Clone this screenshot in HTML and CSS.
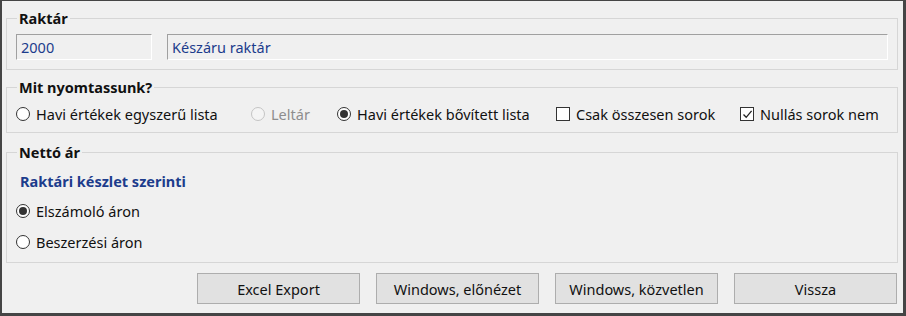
FILE: index.html
```html
<!DOCTYPE html>
<html>
<head>
    <meta charset="UTF-8">
    <meta name="viewport" content="width=device-width, initial-scale=1.0">
    <title>Raktár nyomtatás</title>
    <link rel="stylesheet" href="styles.css">
</head>
<body>
    <div id="window">
        <fieldset class="group group-store">
            <legend>Raktár</legend>
            <div class="fields">
                <div class="field field-code">2000</div>
                <div class="field field-name">Készáru raktár</div>
            </div>
        </fieldset>

        <fieldset class="group group-print">
            <legend>Mit nyomtassunk?</legend>
            <div class="options">
                <label class="option"><span class="radio"></span>Havi értékek egyszerű lista</label>
                <label class="option disabled"><span class="radio"></span>Leltár</label>
                <label class="option"><span class="radio checked"></span>Havi értékek bővített lista</label>
                <label class="option"><span class="check"></span>Csak összesen sorok</label>
                <label class="option">
                    <span class="check checked">
                        <svg width="11" height="11" viewBox="0 0 11 11"><path d="M1.5 5.5 L4.2 8.3 L9.6 1.8" fill="none" stroke="#222" stroke-width="1.3"/></svg>
                    </span>Nullás sorok nem
                </label>
            </div>
        </fieldset>

        <fieldset class="group group-price">
            <legend>Nettó ár</legend>
            <div class="subhead">Raktári készlet szerinti</div>
            <label class="option row"><span class="radio checked"></span>Elszámoló áron</label>
            <label class="option row second"><span class="radio"></span>Beszerzési áron</label>
        </fieldset>

        <div class="buttons">
            <button>Excel Export</button>
            <button>Windows, előnézet</button>
            <button>Windows, közvetlen</button>
            <button>Vissza</button>
        </div>
    </div>
</body>
</html>
```

FILE: styles.css
```css
body {
    margin: 0;
    font-family: "Noto Sans", "Open Sans", sans-serif;
    font-size: 14.5px;
    color: #111;
    background-color: #f0f0f0;
}

#window {
    width: 906px;
    height: 316px;
    box-sizing: border-box;
    border-style: solid;
    border-color: #454545;
    border-width: 1px 3px 3px 2px;
    background-color: #f0f0f0;
    padding: 9px 5px 0 4px;
}

.group {
    margin: 0;
    border: 1px solid #d6d6d6;
    padding: 0 9px 8px 9px;
    min-width: 0;
}

.group legend {
    font-weight: bold;
    font-size: 14.5px;
    line-height: 16px;
    padding: 0 2px;
    margin-left: 1px;
}

.group-store {
    padding-bottom: 9px;
}

.fields {
    display: flex;
    gap: 15px;
    padding-top: 8px;
}

.field {
    height: 26px;
    box-sizing: border-box;
    border: 1px solid;
    border-color: #a0a0a0 #fff #fff #a0a0a0;
    color: #1c3c8c;
    padding: 0 4px;
    line-height: 24px;
}

.field-code {
    width: 136px;
}

.field-name {
    flex: 1;
}

.group-print {
    margin-top: 9px;
}

.options {
    display: grid;
    grid-template-columns: 235px 86px 219px 184px 1fr;
    padding-top: 9px;
    height: 20px;
}

.option {
    display: flex;
    align-items: center;
    gap: 6px;
    white-space: nowrap;
    line-height: 20px;
}

.option.disabled {
    color: #8d8d8d;
}

.radio {
    width: 14px;
    height: 14px;
    box-sizing: border-box;
    border: 1px solid #333;
    border-radius: 50%;
    background-color: #fff;
    display: flex;
    align-items: center;
    justify-content: center;
    flex: none;
}

.disabled .radio {
    border-color: #c4c4c4;
    background-color: #f4f4f4;
}

.radio.checked::after {
    content: "";
    width: 8px;
    height: 8px;
    border-radius: 50%;
    background-color: #333;
}

.check {
    width: 14px;
    height: 14px;
    box-sizing: border-box;
    border: 1px solid #333;
    background-color: #fff;
    display: flex;
    align-items: center;
    justify-content: center;
    flex: none;
}

.group-price {
    margin-top: 11px;
    padding-bottom: 10px;
}

.subhead {
    color: #1c3c8c;
    font-weight: bold;
    padding: 11px 0 0 4px;
    line-height: 20px;
}

.option.row {
    height: 20px;
    margin-top: 10px;
}

.option.row.second {
    margin-top: 11px;
}

.buttons {
    display: flex;
    justify-content: flex-end;
    gap: 16px;
    padding: 10px 1px 0 0;
}

button {
    width: 163px;
    height: 31px;
    font-family: "Noto Sans", "Open Sans", sans-serif;
    font-size: 14.5px;
    color: #111;
    background-color: #e1e1e1;
    border: 1px solid #adadad;
    border-radius: 0;
    padding: 0;
}
```
